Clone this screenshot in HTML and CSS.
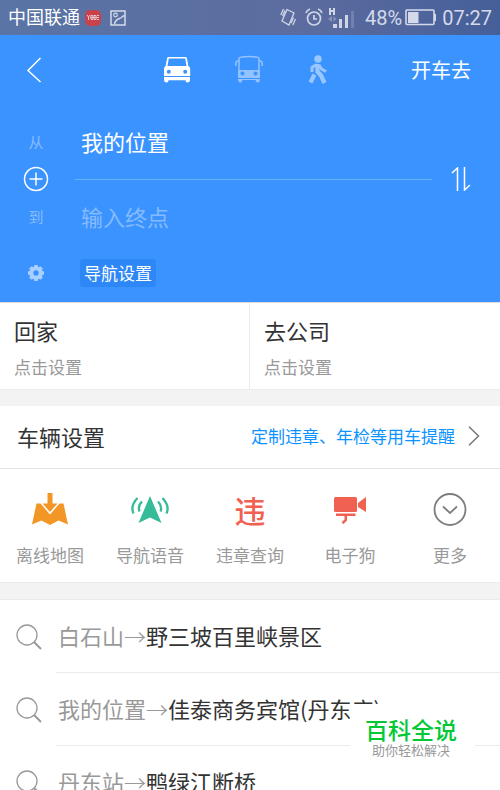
FILE: index.html
```
<!DOCTYPE html>
<html lang="zh-CN">
<head>
<meta charset="utf-8">
<meta name="viewport" content="width=device-width, initial-scale=1">
<title>开车去</title>
<link rel="stylesheet" href="styles.css">
</head>
<body>
<div class="app">
  <div class="status">
    <span class="carrier">中国联通</span>
    <svg class="status-app" width="16" height="16" viewBox="0 0 16 16"><rect width="16" height="16" rx="5" fill="#c8424b"/><path d="M2 5l1.500 2L5 5M3.500 7v3M6 5.500h2v4H6zM9 5.500h2v4H9zM12 5.500h2M12 7.500h2M12 9.500h2M5 7.500h9" stroke="#e9c3cb" fill="none"/></svg>
    <svg width="16" height="16" viewBox="0 0 16 16" fill="none" stroke="#d5daea"><rect x="1" y="1" width="14" height="14" stroke-width="1.500"/><circle cx="5.500" cy="5" r="1.800" stroke-width="1.200"/><path d="M4.500 14.500C5 10 8 9 9.500 8.500S13 6 14.500 5.500" stroke-width="1.500"/></svg>
    <span class="spacer"></span>
    <svg width="16" height="19" viewBox="0 0 16 19" fill="none" stroke="#d0d5e6" stroke-width="1.300"><path d="M7 1.500l7 3.500-5 12-7-4z"/><path d="M3.500 1L.8 7M5 2.500L2.500 8M15.500 11l-2.700 6M13.500 9.500L11 15"/></svg>
    <svg class="alarm" width="18" height="19" viewBox="0 0 18 19" fill="none" stroke="#d0d5e6" stroke-width="1.700"><circle cx="9" cy="10.500" r="6.500"/><path d="M9 7v4h3M1 5q1-3 4-4M17 5q-1-3-4-4"/></svg>
    <svg class="signal" width="26" height="21" viewBox="0 0 26 21" fill="#d0d5e6"><path d="M1 1h2v2h2V1h2v7H5V5H3v3H1z"/><path d="M4 9v6L0 12zM5.500 9v6l3-3z" fill="#8792b6"/><rect x="5" y="17" width="4" height="4"/><rect x="11" y="12" width="3" height="9"/><rect x="17" y="8" width="3" height="13"/><rect x="23" y="4" width="3" height="17" fill="#7280ab"/></svg>
    <span class="num">48%</span>
    <svg class="battery" width="31" height="17" viewBox="0 0 31 17"><rect x="1" y="1" width="28" height="14.500" rx="1" fill="none" stroke="#d5daea" stroke-width="1.600"/><rect x="3" y="3" width="10.500" height="11" fill="#d5daea"/><path d="M29 5h2v7h-2z" fill="#d5daea"/></svg>
    <span class="num">07:27</span>
  </div>

  <header class="header">
    <nav class="nav">
      <button class="back" aria-label="返回"><svg width="16" height="28" viewBox="0 0 16 28"><path d="M14.500 2L2 14.500 14.500 26" fill="none" stroke="#fff" stroke-width="1.500"/></svg></button>
      <div class="modes">
        <button aria-label="驾车"><svg width="28" height="30" viewBox="0 0 28 30" fill="#fff"><path d="M3 3.300Q3.300 2 5 2h16q1.700 0 2 1.300L24.300 11q1.900.3 1.900 3.300V21H0v-6.700Q0 11.300 1.700 11zM4.800 3.500L3.500 11h19l-1.300-7.500z" fill-rule="evenodd"/><path d="M0 22h26v2.500q0 3-2.500 3-2 0-2-2.300h-17q0 2.300-2 2.300-2.500 0-2.500-3z"/><circle cx="4.800" cy="16.800" r="2" fill="#3b93ff"/><circle cx="21.200" cy="16.800" r="2" fill="#3b93ff"/></svg></button>
        <button aria-label="公交"><svg width="28" height="30" viewBox="0 0 28 30"><g fill="none" stroke="#92c2ff" stroke-width="1.500"><path d="M4 15V3.500Q4 2.500 5.500 2.300 14 .8 22.500 2.300 24 2.500 24 3.500V15"/><path d="M4 5.500Q.8 6 .8 8.500V11M24 5.500q3.200.5 3.200 3V11"/></g><path d="M3 15h22v8H3zM3 24h22v1q-.5 2.500-2.300 2.500T20.500 25h-13q-.4 2.500-2.200 2.500T3 25z" fill="#92c2ff"/><circle cx="7.500" cy="18.500" r="2" fill="#3b93ff"/><circle cx="20.500" cy="18.500" r="2" fill="#3b93ff"/></svg></button>
        <button aria-label="步行"><svg width="28" height="30" viewBox="0 0 28 30" fill="none" stroke="#9ac7ff" stroke-linejoin="round"><circle cx="12" cy="4" r="3.700" fill="#9ac7ff" stroke="none"/><path d="M10.500 9.500L6 12.500V17M13 10l2.500 4 4.500 2.500" stroke-width="3"/><path d="M11.500 9v9M11.500 16.500l3.500 4 3.500 7.500M8.500 19.500L4.500 27.500" stroke-width="4.200"/></svg></button>
      </div>
      <button class="go">开车去</button>
    </nav>
    <form class="route">
      <label for="from">从</label>
      <input id="from" value="我的位置">
      <button type="button" class="add" aria-label="添加途经点"><svg width="26" height="26" viewBox="0 0 26 26" fill="none" stroke="#fff" stroke-width="1.500"><circle cx="13" cy="13" r="11.500"/><path d="M13 6.500v13M6.500 13h13"/></svg></button>
      <hr>
      <button type="button" class="swap" aria-label="交换起终点"><svg width="20" height="24" viewBox="0 0 20 24" fill="none" stroke="#fff" stroke-width="1.500"><path d="M1 6l5.500-5V24M13.500 0v23l5.500-5"/></svg></button>
      <label for="to">到</label>
      <input id="to" placeholder="输入终点">
    </form>
    <div class="settings">
      <svg width="16" height="16" viewBox="0 0 16 16"><g fill="#a9d0ff"><circle cx="8" cy="8" r="6.500"/><g id="teeth"><rect x="6" width="4" height="16" rx="1"/><rect y="6" width="16" height="4" rx="1"/></g><use href="#teeth" transform="rotate(45 8 8)"/></g><circle cx="8" cy="8" r="2.700" fill="#3b93ff"/></svg>
      <button class="nav-set">导航设置</button>
    </div>
  </header>

  <section class="places">
    <a href="#home"><b>回家</b><span>点击设置</span></a>
    <a href="#work"><b>去公司</b><span>点击设置</span></a>
  </section>

  <section class="vehicle">
    <a class="vehicle-head" href="#vehicle">
      <h2>车辆设置</h2>
      <span>定制违章、年检等用车提醒</span>
      <svg width="12" height="20" viewBox="0 0 12 20"><path d="M1 .8L10.500 10 1 19.200" fill="none" stroke="#777" stroke-width="1.500"/></svg>
    </a>
    <div class="tools">
      <a href="#map"><svg width="36" height="36" viewBox="0 0 36 36" fill="#f29725"><path d="M4.500 11.500H8.500l9.500 11 9.500-11h4L36 32.500 26.500 28.500 18 33 9.500 28.500 0 32.500z"/><path d="M15.500 1h5v10.500h5L18 20 10.500 11.500h5z"/></svg><span>离线地图</span></a>
      <a href="#voice"><svg width="38" height="36" viewBox="0 0 38 36"><path d="M19 4l11.500 27L19 25.500 7.500 31z" fill="#34bb98"/><path d="M6.500 6Q-1 14 2.500 21.500M11 9.500Q6.500 14 8.500 19.500M31.500 6q7.500 8 4 15.500M27 9.500q4.500 4.500 2.500 10" fill="none" stroke="#34bb98" stroke-width="2.300"/></svg><span>导航语音</span></a>
      <a href="#violation"><i>违</i><span>违章查询</span></a>
      <a href="#camera"><svg width="34" height="36" viewBox="0 0 34 36" fill="#f06152"><rect x="1" y="5" width="23" height="15" rx="1.500"/><path d="M25 11l8-6v15l-8-5zM3 21.500h19.500V24H14v4.500L10.500 32 8.500 30.500l3-3V24H3z"/></svg><span>电子狗</span></a>
      <a href="#more"><svg width="34" height="36" viewBox="0 0 34 36" fill="none" stroke="#7d7d7d" stroke-width="1.800"><circle cx="17" cy="17.500" r="15.500"/><path d="M10 14.500l7 6.500 7-6.500"/></svg><span>更多</span></a>
    </div>
  </section>

  <ul class="history">
    <li><svg width="26" height="26" viewBox="0 0 26 26"><g fill="none" stroke="#999"><circle cx="11" cy="11" r="10" stroke-width="1.300"/><path d="M18 18l7 7" stroke-width="2"/></g></svg><a href="#r1">白石山<em>→</em><b>野三坡百里峡景区</b></a></li>
    <li><svg width="26" height="26" viewBox="0 0 26 26"><g fill="none" stroke="#999"><circle cx="11" cy="11" r="10" stroke-width="1.300"/><path d="M18 18l7 7" stroke-width="2"/></g></svg><a href="#r2">我的位置<em>→</em><b>佳泰商务宾馆(丹东店)</b></a></li>
    <li><svg width="26" height="26" viewBox="0 0 26 26"><g fill="none" stroke="#999"><circle cx="11" cy="11" r="10" stroke-width="1.300"/><path d="M18 18l7 7" stroke-width="2"/></g></svg><a href="#r3">丹东站<em>→</em><b>鸭绿江断桥</b></a></li>
  </ul>

  <aside class="badge"><strong>百科全说</strong><span>助你轻松解决</span></aside>
</div>
</body>
</html>
```
FILE: styles.css
```
* { box-sizing: border-box; }

body {
  margin: 0;
  font-family: "Noto Sans CJK SC", sans-serif;
  font-size: 17px;
  line-height: 24px;
  color: #333;
}

a { color: inherit; text-decoration: none; }
b, i, em, h2 { font-weight: 400; font-style: normal; }
svg { display: block; flex: none; }

button {
  display: block;
  padding: 0;
  border: 0;
  background: none;
  color: #fff;
  font: inherit;
}

.app {
  position: relative;
  height: 100vh;
  overflow: hidden;
  background: #f3f3f3;
}

.status {
  display: flex;
  align-items: center;
  height: 35px;
  padding: 0 8px;
  background: linear-gradient(90deg, #5974a5, #5c6c9f 60%, #455f99);
  color: #fff;
  font-size: 18px;
}

.carrier { padding-bottom: 3px; }
.status-app { margin: 0 9px 0 5px; }
.spacer { flex: 1; }
.alarm { margin: 0 5px 0 9px; }
.signal { margin-right: 11px; }
.battery { margin: 0 6px 0 3px; }

.num {
  font-family: Roboto, sans-serif;
  font-size: 20px;
  color: #d5daea;
}

.header { background: #3b93ff; padding-bottom: 15px; }

.nav {
  display: grid;
  grid-template-columns: 1fr auto 1fr;
  align-items: center;
  height: 70px;
  padding: 0 29px 0 26px;
}

.modes { display: flex; gap: 43px; }
.go { justify-self: end; font-size: 20px; }

.route {
  display: grid;
  grid-template-columns: 72px 1fr 68px;
  grid-template-rows: 36px 38px 38px;
  align-items: center;
  margin-top: 19px;
}

.route label {
  grid-column: 1;
  text-align: center;
  font-size: 15px;
  color: #85bbff;
}

.route input {
  width: 100%;
  padding: 0 0 3px 9px;
  border: 0;
  outline: 0;
  background: none;
  color: #fff;
  font: inherit;
  font-size: 22px;
  line-height: 32px;
}

.route input::placeholder { color: #85bbff; opacity: 1; }
.add { grid-column: 1; justify-self: center; }

.route hr {
  width: 100%;
  height: 1px;
  margin: 0;
  padding: 0;
  border: 0;
  border-left: 3px solid #3b93ff;
  background: #6aaeff;
}

.swap { padding-left: 19px; }

.settings {
  display: flex;
  align-items: center;
  gap: 36px;
  margin-top: 23px;
  padding-left: 28px;
}

.nav-set {
  padding: 0 4px;
  border-radius: 3px;
  background: #2d87f6;
  line-height: 28px;
}

.places {
  display: grid;
  grid-template-columns: 1fr 1fr;
  background: #fff;
  border-top: 1px solid #dcdcdc;
  border-bottom: 1px solid #ebebeb;
}

.places a {
  display: grid;
  gap: 9px;
  padding: 11px 14px 10px;
}

.places a:first-child { border-right: 1px solid #ebebeb; }
.places b { font-size: 22px; line-height: 32px; }
.places span { color: #999; }

.vehicle {
  margin-top: 16px;
  background: #fff;
  border-bottom: 1px solid #ebebeb;
}

.vehicle-head {
  display: flex;
  align-items: center;
  height: 63px;
  padding: 0 20px 2px 17px;
  border-bottom: 1px solid #e4e4e4;
}

.vehicle-head h2 { flex: 1; margin: 0; font-size: 22px; }
.vehicle-head span { margin-right: 13px; color: #0d93ff; }

.tools {
  display: grid;
  grid-template-columns: repeat(5, 1fr);
  padding: 23px 0 15px;
  text-align: center;
  color: #999;
}

.tools a { display: grid; justify-items: center; gap: 15px; }

.tools i {
  font-size: 31px;
  line-height: 36px;
  font-weight: 500;
  color: #f06152;
}

.history {
  margin: 16px 0 0;
  padding: 0;
  list-style: none;
  background: #fff;
  border-top: 1px solid #ebebeb;
}

.history li {
  display: flex;
  align-items: center;
  gap: 14px;
  padding-left: 16px;
}

.history a {
  flex: 1;
  padding: 19px 0 21px 2px;
  border-bottom: 1px solid #ebebeb;
  font-size: 22px;
  line-height: 32px;
  color: #999;
  white-space: nowrap;
}

.history em { font-weight: 300; }
.history b { color: #333; }

.badge {
  position: absolute;
  right: 25px;
  bottom: 6px;
  width: 125px;
  height: 80px;
  padding: 11px 3px 0 0;
  background: #fff;
  text-align: center;
}

.badge strong {
  display: block;
  font-size: 23px;
  font-weight: 500;
  line-height: 28px;
  color: #00c935;
}

.badge span {
  display: block;
  font-size: 13px;
  line-height: 14px;
  color: #999;
}
```
